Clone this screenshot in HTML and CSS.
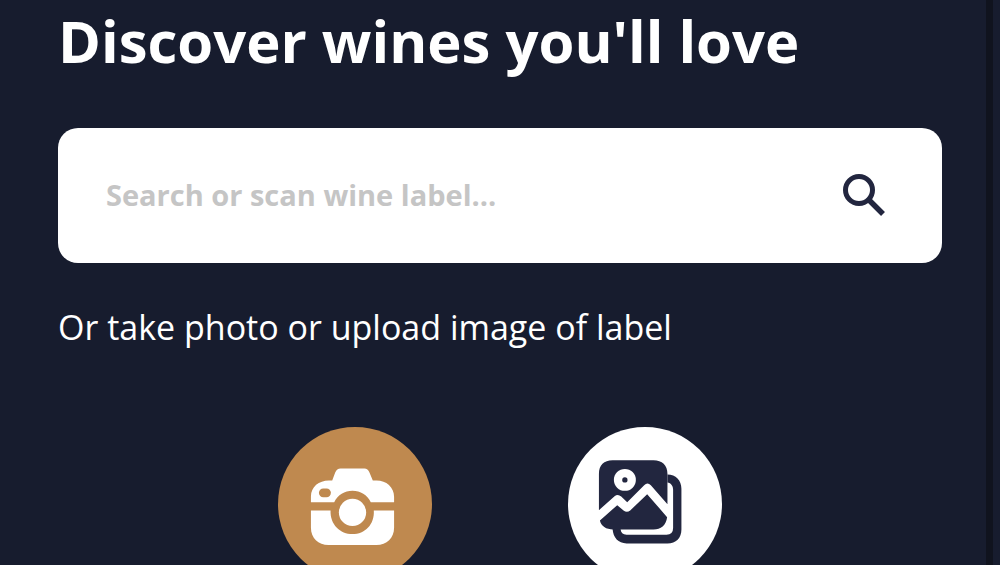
FILE: index.html
```html
<!DOCTYPE html>
<html lang="en">
<head>
<meta charset="utf-8">
<meta name="viewport" content="width=device-width, initial-scale=1">
<title>Discover wines</title>
<link rel="stylesheet" href="styles.css">
</head>
<body>
<main class="discover">
  <h1 class="title">Discover wines you'll love</h1>
  <form class="search" role="search">
    <input class="search-input" type="text" aria-label="Search or scan wine label" placeholder="Search or scan wine label...">
    <button class="search-button" type="button" aria-label="Search">
      <svg class="search-icon" viewBox="0 0 44 44" aria-hidden="true">
        <circle cx="17" cy="17" r="13.500" fill="none" stroke="currentColor" stroke-width="5"/>
        <path d="M27 27L41 41" fill="none" stroke="currentColor" stroke-width="5.500"/>
      </svg>
    </button>
  </form>
  <p class="hint">Or take photo or upload image of label</p>
  <div class="actions">
    <button class="action action-camera" type="button" aria-label="Take photo">
      <svg class="action-icon" viewBox="24 36 463 463" aria-hidden="true">
        <path fill="currentColor" d="M123 262V245C123 216 147 197 177 197H187L196 173Q201 161 212 161H284Q294 161 299 173L309 197H320C350 197 373 217 373 246V262H303C292 240 272 228 248 228S204 240 193 262Z"/>
        <path fill="currentColor" d="M123 287H182C180 329 211 358 248 358S315 329 312 287H373V339C373 370 351 391 320 391H176C145 391 123 370 123 339Z"/>
        <circle cx="248" cy="293" r="41" fill="currentColor"/>
        <rect class="cutout" x="147" y="221" width="36" height="26" rx="13"/>
      </svg>
    </button>
    <button class="action action-gallery" type="button" aria-label="Upload image">
      <svg class="action-icon" viewBox="24 36 463 463" aria-hidden="true">
        <path fill="currentColor" d="M158 343H182C183 354 189 360 200 360H320Q340 360 340 340V225C340 213 334 205 323 203V179C348 179 365 196 365 222V344C365 370 349 386 323 386H200C175 386 160 369 158 343Z"/>
        <path fill="currentColor" d="M117 286V177C117 151 132 136 158 136H281C307 136 323 151 323 177V268L273 211Q263 201 253 211L202 262L184 245Q174 236 164 244Z"/>
        <path fill="currentColor" d="M120 317L172 271L191 287Q201 295 211 287L262 238L322 307C319 331 303 344 281 344H160C139 344 123 334 120 317Z"/>
        <circle class="cutout" cx="195" cy="195" r="33"/>
        <circle cx="195" cy="195" r="8" fill="currentColor"/>
      </svg>
    </button>
  </div>
</main>
</body>
</html>
```
FILE: styles.css
```css
* {
  box-sizing: border-box;
}

body {
  margin: 0;
  padding-right: 7px;
  background: #171c2e;
  color: #fff;
  font-family: "Open Sans", "Noto Sans", sans-serif;
}

.discover {
  height: 100vh;
  overflow: hidden;
  padding: 0 44px 0 58px;
  border-right: 7px solid #10131e;
}

.title {
  margin: 0;
  font-size: 58px;
  line-height: 82px;
  font-weight: 700;
}

.search {
  display: flex;
  align-items: center;
  margin-top: 46px;
  padding: 0 56px 2px 48px;
  border-radius: 20px;
  background: #fff;
}

.search-input {
  flex: 1;
  min-width: 0;
  height: 133px;
  padding: 0;
  border: 0;
  outline: 0;
  background: transparent;
  color: #22263f;
  font: 700 29px "Open Sans", "Noto Sans", sans-serif;
}

.search-input::placeholder {
  color: #c5c5c5;
  opacity: 1;
}

.search-button {
  display: flex;
  padding: 0;
  border: 0;
  background: transparent;
  color: #22263f;
}

.search-icon {
  width: 44px;
  height: 44px;
}

.hint {
  margin: 40px 0 0;
  font-size: 34px;
  line-height: 48px;
}

.actions {
  display: flex;
  justify-content: center;
  gap: 136px;
  margin-top: 76px;
}

.action {
  width: 154px;
  height: 154px;
  padding: 0;
  border: 0;
  border-radius: 50%;
}

.action-camera {
  background: #bf894f;
  color: #fff;
}

.action-gallery {
  background: #fff;
  color: #22263f;
}

.action-icon {
  display: block;
  width: 100%;
  height: 100%;
}

.action-camera .cutout {
  fill: #bf894f;
}

.action-gallery .cutout {
  fill: #fff;
}
```
